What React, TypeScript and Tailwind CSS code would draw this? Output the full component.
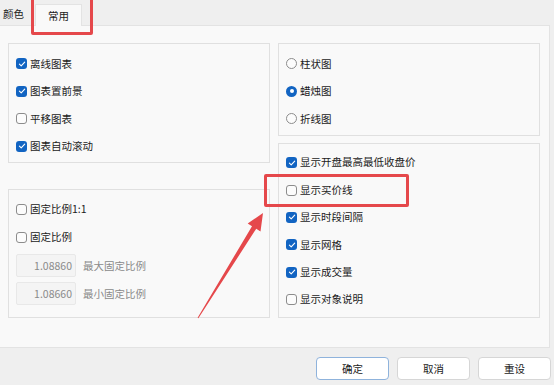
import React from "react";

const font = { fontFamily: '"Noto Sans CJK SC", "Noto Sans", sans-serif' };

function Check({ checked }: { checked?: boolean }) {
  if (checked) {
    return (
      <span className="flex h-[11px] w-[11px] shrink-0 items-center justify-center rounded-[3px] bg-[#1264c2]">
        <svg width="8" height="8" viewBox="0 0 8 8">
          <path d="M1.4 4.2 L3.2 5.9 L6.7 2.2" fill="none" stroke="#fff" strokeWidth="1.1" strokeLinecap="round" strokeLinejoin="round" />
        </svg>
      </span>
    );
  }
  return <span className="h-[11px] w-[11px] shrink-0 rounded-[3px] border border-[#8c8c8c] bg-[#fcfcfc]" />;
}

function Radio({ checked }: { checked?: boolean }) {
  if (checked) {
    return (
      <span className="flex h-[11px] w-[11px] shrink-0 items-center justify-center rounded-full bg-[#1264c2]">
        <span className="h-[4px] w-[4px] rounded-full bg-white" />
      </span>
    );
  }
  return <span className="h-[11px] w-[11px] shrink-0 rounded-full border border-[#8c8c8c] bg-[#fcfcfc]" />;
}

function Row({ children, h, icon }: { children: React.ReactNode; h: string; icon: React.ReactNode }) {
  return (
    <div className={`flex items-center gap-[3px] pl-[7px] ${h}`}>
      {icon}
      <span className="text-[10.5px] leading-none text-[#1b1b1b]">{children}</span>
    </div>
  );
}

function NumField({ value, label }: { value: string; label: string }) {
  return (
    <div className="flex items-center gap-[7px] pl-[7px]">
      <div className="flex h-[23px] w-[60px] items-center justify-end rounded-[2px] border border-[#e8e8e8] bg-[#f4f4f4] pr-[3px] text-[10.5px] text-[#8a8a8a]">
        {value}
      </div>
      <span className="text-[10.5px] text-[#8a8a8a]">{label}</span>
    </div>
  );
}

export default function App() {
  return (
    <div className="relative h-[385px] w-[554px] overflow-hidden bg-[#efefef]" style={font}>
      {/* tabs */}
      <div className="flex h-[25px] items-end">
        <div className="mb-[6px] pl-[3px] text-[10.5px] leading-none text-[#1b1b1b]">颜色</div>
        <div className="relative z-10 -mb-px ml-[11px] flex h-[22px] w-[47px] items-center justify-center border border-b-0 border-[#e3e3e3] bg-[#f9f9f9] text-[10.5px] text-[#1b1b1b]">
          常用
        </div>
      </div>

      {/* panel */}
      <div className="h-[323px] w-[550px] border-y border-r border-[#e3e3e3] bg-[#f9f9f9] pl-[8px] pt-[17px]">
        <div className="flex gap-[8px]">
          {/* left column */}
          <div className="flex w-[262px] flex-col">
            <div className="h-[120px] border border-[#e0e0e0] bg-[#f9f9f9] pt-[6px]">
              <Row h="h-[27.5px]" icon={<Check checked />}>离线图表</Row>
              <Row h="h-[27.5px]" icon={<Check checked />}>图表置前景</Row>
              <Row h="h-[27.5px]" icon={<Check />}>平移图表</Row>
              <Row h="h-[27.5px]" icon={<Check checked />}>图表自动滚动</Row>
            </div>
            <div className="mt-[26px] h-[129px] border border-[#e0e0e0] bg-[#f9f9f9] pt-[5px]">
              <Row h="h-[28px]" icon={<Check />}>固定比例1:1</Row>
              <Row h="h-[28px]" icon={<Check />}>固定比例</Row>
              <div className="mt-[3px] flex flex-col gap-[5px]">
                <NumField value="1.08860" label="最大固定比例" />
                <NumField value="1.08660" label="最小固定比例" />
              </div>
            </div>
          </div>
          {/* right column */}
          <div className="flex w-[262px] flex-col gap-[7px]">
            <div className="h-[93px] border border-[#e0e0e0] bg-[#f9f9f9] pt-[6px]">
              <Row h="h-[27.5px]" icon={<Radio />}>柱状图</Row>
              <Row h="h-[27.5px]" icon={<Radio checked />}>蜡烛图</Row>
              <Row h="h-[27.5px]" icon={<Radio />}>折线图</Row>
            </div>
            <div className="h-[175px] border border-[#e0e0e0] bg-[#f9f9f9] pt-[5px]">
              <Row h="h-[27.4px]" icon={<Check checked />}>显示开盘最高最低收盘价</Row>
              <Row h="h-[27.4px]" icon={<Check />}>显示买价线</Row>
              <Row h="h-[27.4px]" icon={<Check checked />}>显示时段间隔</Row>
              <Row h="h-[27.4px]" icon={<Check checked />}>显示网格</Row>
              <Row h="h-[27.4px]" icon={<Check checked />}>显示成交量</Row>
              <Row h="h-[27.4px]" icon={<Check />}>显示对象说明</Row>
            </div>
          </div>
        </div>
      </div>

      {/* buttons */}
      <div className="flex justify-end gap-[8px] pr-[3px] pt-[9px]">
        <button className="flex h-[23px] w-[73px] items-center justify-center rounded-[4px] border border-[#8fb3dc] bg-white text-[10.5px] text-[#1b1b1b]">
          确定
        </button>
        <button className="flex h-[23px] w-[73px] items-center justify-center rounded-[4px] border border-[#d6d6d6] bg-white text-[10.5px] text-[#1b1b1b]">
          取消
        </button>
        <button className="flex h-[23px] w-[73px] items-center justify-center rounded-[4px] border border-[#d6d6d6] bg-white text-[10.5px] text-[#1b1b1b]">
          重设
        </button>
      </div>

      {/* annotations */}
      <div className="pointer-events-none absolute left-[31px] top-[-5px] h-[40px] w-[62px] rounded-[2px] border-[3px] border-[#e5484b]" />
      <div className="pointer-events-none absolute left-[264px] top-[174px] h-[33px] w-[145px] rounded-[2px] border-[3px] border-[#e5484b]" />
      <svg className="pointer-events-none absolute left-0 top-0" width="554" height="385" viewBox="0 0 554 385">
        <polygon
          points="197.6,317.7 252.0,226.2 247.7,223.6 263,213 260.5,231.4 256.2,228.8 198.4,318.3"
          fill="#e5484b"
        />
      </svg>
    </div>
  );
}
